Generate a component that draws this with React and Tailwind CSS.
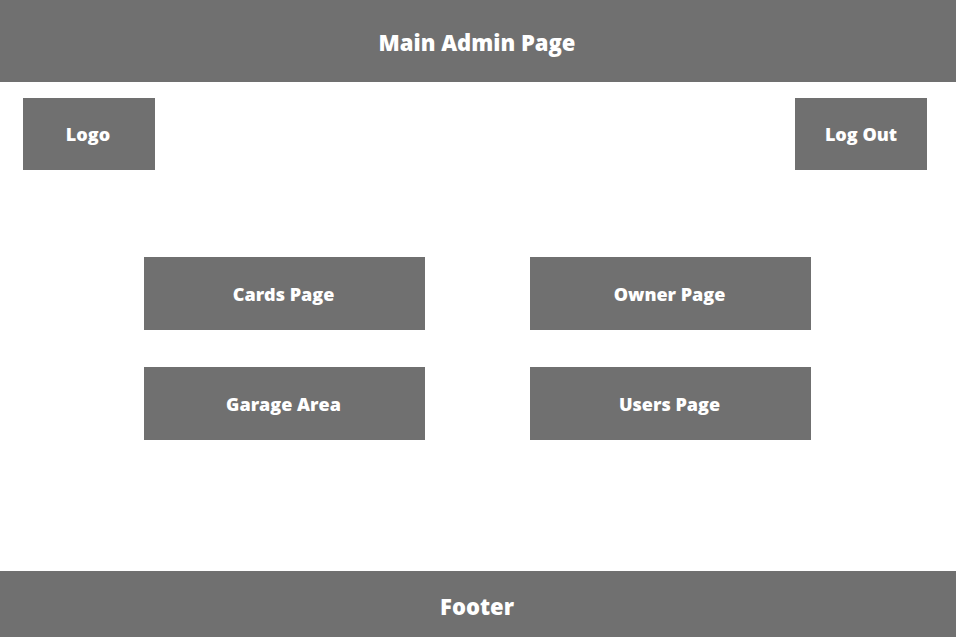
const pages = ["Cards Page", "Owner Page", "Garage Area", "Users Page"];

export default function App() {
  return (
    <div className="flex min-h-screen flex-col bg-white font-['Open_Sans','Noto_Sans',sans-serif] font-extrabold text-white">
      <header className="bg-[#707070] pt-6 pr-0.5 pb-[22px] text-center">
        <h1 className="text-[22px] leading-9">Main Admin Page</h1>
      </header>
      <nav className="flex items-start justify-between pt-4 pr-[29px] pl-[23px]">
        <a href="#" className="flex h-[72px] w-[132px] items-center justify-center bg-[#707070] pr-0.5 text-lg">
          Logo
        </a>
        <button type="button" className="h-[72px] w-[132px] bg-[#707070] text-lg">
          Log Out
        </button>
      </nav>
      <main className="grid flex-1 grid-cols-2 content-start gap-x-[105px] gap-y-[37px] pt-[87px] pr-[145px] pl-36">
        {pages.map((page) => (
          <button key={page} type="button" className="h-[73px] bg-[#707070] pr-0.5 text-lg">
            {page}
          </button>
        ))}
      </main>
      <footer className="flex h-[66px] items-center justify-center bg-[#707070] pt-1 pr-0.5 text-[22px]">
        Footer
      </footer>
    </div>
  );
}
